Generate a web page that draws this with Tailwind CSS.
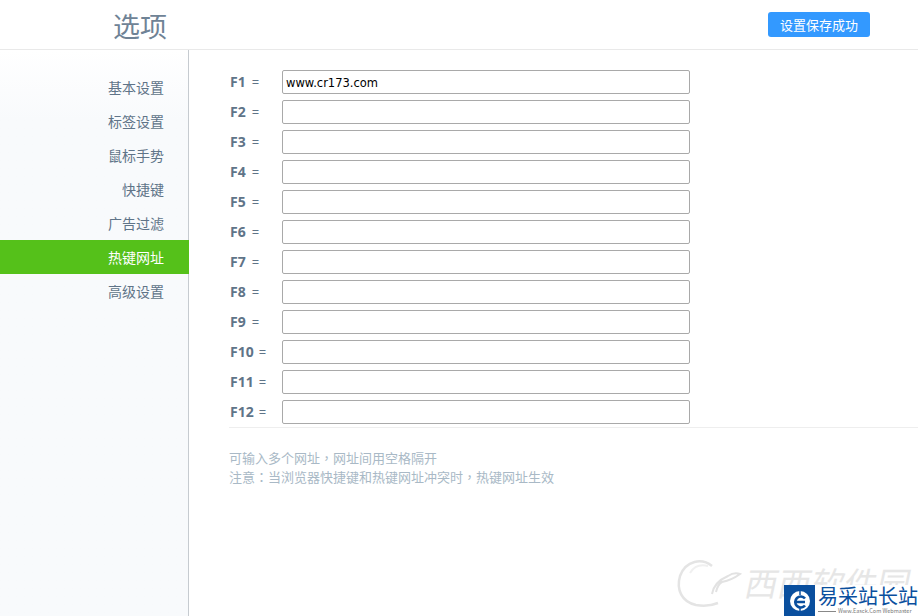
<!DOCTYPE html>
<html lang="zh-CN">
<head>
    <meta charset="UTF-8">
    <title>选项</title>
    <script src="https://cdn.jsdelivr.net/npm/@tailwindcss/browser@4"></script>
</head>
<body class="relative h-[616px] w-[918px] overflow-hidden bg-white font-['Noto_Sans_CJK_SC',sans-serif]">

    <!-- header -->
    <header class="flex h-[50px] items-center justify-between border-b border-[#e9e9e9] pl-[113px] pr-[48px]">
        <h1 class="pt-[2px] text-[27px] font-normal leading-none text-[#6f8396]">选项</h1>
        <div class="flex h-[25px] w-[102px] items-center justify-center rounded-[3px] bg-[#3399ff] text-[13px] text-white">设置保存成功</div>
    </header>

    <div class="flex h-[566px]">
        <!-- sidebar -->
        <nav class="h-full w-[189px] shrink-0 border-r border-[#c6cbd0] bg-gradient-to-b from-white to-[#f8fafc] to-[70px] pt-[20px] text-right text-[14px] text-[#5f7488]">
            <a class="block h-[34px] pr-[24px] leading-[34px]">基本设置</a>
            <a class="block h-[34px] pr-[24px] leading-[34px]">标签设置</a>
            <a class="block h-[34px] pr-[24px] leading-[34px]">鼠标手势</a>
            <a class="block h-[34px] pr-[24px] leading-[34px]">快捷键</a>
            <a class="block h-[34px] pr-[24px] leading-[34px]">广告过滤</a>
            <a class="-mr-px block h-[34px] bg-[#55c11a] pr-[25px] leading-[34px] text-white">热键网址</a>
            <a class="block h-[34px] pr-[24px] leading-[34px]">高级设置</a>
        </nav>

        <!-- hotkey urls -->
        <main class="min-w-0 flex-1 pl-[40px] pt-[20px]">
            <div class="flex flex-col gap-[6px] font-['Noto_Sans',sans-serif] text-[#5f7488]">
                <div class="flex h-[24px] items-center">
                    <span class="w-[53px] pl-px text-[13px]"><b class="text-[14px]">F1</b><span class="ml-[6px]">=</span></span>
                    <input class="h-[24px] w-[408px] rounded-[2px] border border-[#a9a9a9] px-[3px] pt-px font-['DejaVu_Sans',sans-serif] text-[11.5px] text-black" value="www.cr173.com">
                </div>
                <div class="flex h-[24px] items-center">
                    <span class="w-[53px] pl-px text-[13px]"><b class="text-[14px]">F2</b><span class="ml-[6px]">=</span></span>
                    <input class="h-[24px] w-[408px] rounded-[2px] border border-[#a9a9a9]">
                </div>
                <div class="flex h-[24px] items-center">
                    <span class="w-[53px] pl-px text-[13px]"><b class="text-[14px]">F3</b><span class="ml-[6px]">=</span></span>
                    <input class="h-[24px] w-[408px] rounded-[2px] border border-[#a9a9a9]">
                </div>
                <div class="flex h-[24px] items-center">
                    <span class="w-[53px] pl-px text-[13px]"><b class="text-[14px]">F4</b><span class="ml-[6px]">=</span></span>
                    <input class="h-[24px] w-[408px] rounded-[2px] border border-[#a9a9a9]">
                </div>
                <div class="flex h-[24px] items-center">
                    <span class="w-[53px] pl-px text-[13px]"><b class="text-[14px]">F5</b><span class="ml-[6px]">=</span></span>
                    <input class="h-[24px] w-[408px] rounded-[2px] border border-[#a9a9a9]">
                </div>
                <div class="flex h-[24px] items-center">
                    <span class="w-[53px] pl-px text-[13px]"><b class="text-[14px]">F6</b><span class="ml-[6px]">=</span></span>
                    <input class="h-[24px] w-[408px] rounded-[2px] border border-[#a9a9a9]">
                </div>
                <div class="flex h-[24px] items-center">
                    <span class="w-[53px] pl-px text-[13px]"><b class="text-[14px]">F7</b><span class="ml-[6px]">=</span></span>
                    <input class="h-[24px] w-[408px] rounded-[2px] border border-[#a9a9a9]">
                </div>
                <div class="flex h-[24px] items-center">
                    <span class="w-[53px] pl-px text-[13px]"><b class="text-[14px]">F8</b><span class="ml-[6px]">=</span></span>
                    <input class="h-[24px] w-[408px] rounded-[2px] border border-[#a9a9a9]">
                </div>
                <div class="flex h-[24px] items-center">
                    <span class="w-[53px] pl-px text-[13px]"><b class="text-[14px]">F9</b><span class="ml-[6px]">=</span></span>
                    <input class="h-[24px] w-[408px] rounded-[2px] border border-[#a9a9a9]">
                </div>
                <div class="flex h-[24px] items-center">
                    <span class="w-[53px] pl-px text-[13px]"><b class="text-[14px]">F10</b><span class="ml-[5px]">=</span></span>
                    <input class="h-[24px] w-[408px] rounded-[2px] border border-[#a9a9a9]">
                </div>
                <div class="flex h-[24px] items-center">
                    <span class="w-[53px] pl-px text-[13px]"><b class="text-[14px]">F11</b><span class="ml-[5px]">=</span></span>
                    <input class="h-[24px] w-[408px] rounded-[2px] border border-[#a9a9a9]">
                </div>
                <div class="flex h-[24px] items-center">
                    <span class="w-[53px] pl-px text-[13px]"><b class="text-[14px]">F12</b><span class="ml-[5px]">=</span></span>
                    <input class="h-[24px] w-[408px] rounded-[2px] border border-[#a9a9a9]">
                </div>
            </div>
            <div class="mt-[3px] border-t border-[#eeeeee] pt-[20px] text-[13px] leading-[19px] text-[#a9b9c6]">
                <p class="h-[19px]">可输入多个网址<span lang="zh-TW" class="font-['Noto_Sans_CJK_TC']">，</span>网址间用空格隔开</p>
                <p class="h-[19px]">注意<span lang="zh-TW" class="font-['Noto_Sans_CJK_TC']">：</span>当浏览器快捷键和热键网址冲突时<span lang="zh-TW" class="font-['Noto_Sans_CJK_TC']">，</span>热键网址生效</p>
            </div>
        </main>
    </div>

    <!-- faint site mark behind the badge -->
    <svg class="absolute left-[672px] top-[556px]" width="80" height="60" viewBox="0 0 80 60">
        <path d="M40 10C30 2 14 4 8 20C4 34 10 46 24 49Q36 51 46 47" fill="none" stroke="#e4e4e4" stroke-width="2.5"/>
        <path d="M36 10Q24 7 18 17" fill="none" stroke="#f0f0f0" stroke-width="2"/>
        <path d="M40 38Q42 26 56 20Q62 16 68 18Q60 24 50 26Q46 28 44 36" fill="none" stroke="#e2e2e2" stroke-width="2"/>
    </svg>
    <div class="absolute left-[746px] top-[562px] -skew-x-12 whitespace-nowrap text-[33px] font-normal leading-[40px] text-[#e6e6e6]">西西软件园</div>

    <!-- site badge -->
    <div class="absolute bottom-0 right-0 flex h-[31px] w-[134px] bg-white">
        <div class="flex h-[31px] w-[31px] shrink-0 items-center justify-center bg-[#0a4f9e]">
            <svg width="24" height="24" viewBox="0 0 24 24">
                <circle cx="12" cy="12" r="10" fill="white"/>
                <path d="M6.5 13h10.5M17 9.5a5.5 5.5 0 1 0 0 7" fill="none" stroke="#0a4f9e" stroke-width="2.6"/>
                <path d="M12 2v4M12 18v4" stroke="#0a4f9e" stroke-width="1.5"/>
            </svg>
        </div>
        <div class="min-w-0 pl-[3px]">
            <div class="text-[20px] leading-[22px] text-[#0a4f9e]">易采站长站</div>
            <div class="mt-px flex items-center gap-[2px] text-[5.5px] leading-[7px] text-[#777777]">
                <span class="h-px w-[18px] shrink-0 bg-[#888888]"></span>
                <span class="whitespace-nowrap">Www.Easck.Com Webmaster</span>
            </div>
        </div>
    </div>
</body>
</html>
